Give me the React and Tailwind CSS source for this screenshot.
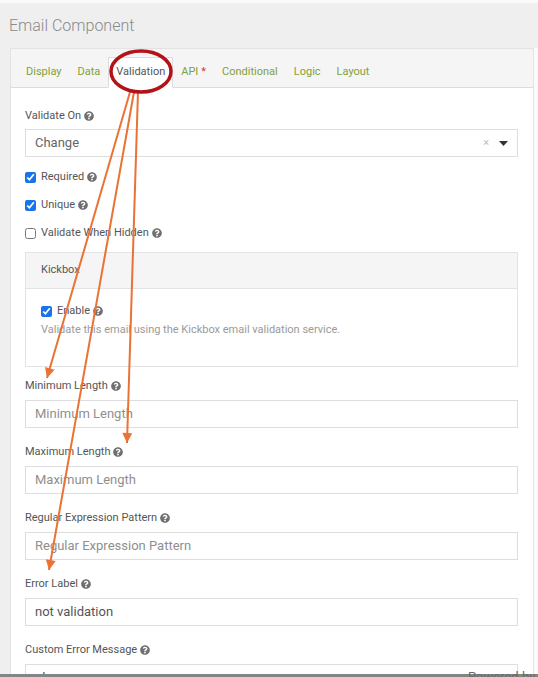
import React from "react";
import { FaQuestionCircle } from "react-icons/fa";

function Help() {
  return <FaQuestionCircle className="text-[#707070] shrink-0" size={10} />;
}

function Label({ children, tight }) {
  return (
    <div
      className={
        tight
          ? "flex items-center gap-[3px] h-4 leading-4 text-[11px] text-[#555] mb-[5px]"
          : "flex items-center gap-[3px] h-4 leading-4 text-[11px] text-[#555] mb-[6px]"
      }
    >
      <span>{children}</span>
      <Help />
    </div>
  );
}

function Check({ checked }) {
  return (
    <input
      type="checkbox"
      readOnly
      checked={checked}
      className="m-0 w-[11px] h-[11px] accent-[#1a73e8] shrink-0"
    />
  );
}

function CheckRow({ checked, children }) {
  return (
    <div className="flex items-center h-4 gap-[5px] text-[11px] text-[#555] leading-4">
      <Check checked={checked} />
      <span className="flex items-center gap-[3px]">
        <span>{children}</span>
        <Help />
      </span>
    </div>
  );
}

function Field({ label, value, placeholder }) {
  return (
    <div className="mb-[16px]">
      <Label>{label}</Label>
      <div className="h-[28px] border border-[#dedede] flex items-center pl-[9px] text-[13px]">
        {value ? (
          <span className="text-[#555]">{value}</span>
        ) : (
          <span className="text-[#8f8f8f]">{placeholder}</span>
        )}
      </div>
    </div>
  );
}

const tabs = ["Display", "Data", "Validation", "API", "Conditional", "Logic", "Layout"];

export default function App() {
  return (
    <div className="relative w-[538px] h-[677px] overflow-hidden bg-[#efefef] font-['Roboto',sans-serif]">
      <div className="h-[3px] bg-[#fafafa]" />
      <div className="h-[45px] pl-[9px] flex items-center text-[16px] font-light text-[#8a8a8a]">
        Email Component
      </div>
      <div className="flex">
        <div className="w-[10px] shrink-0" />
        <div className="w-[524px] shrink-0 bg-white border border-[#e3e3e3]">
          <div className="h-[39px] bg-[#f5f5f5] border-b border-[#dcdcdc] flex items-end pl-[7px]">
            {tabs.map((t) => {
              const active = t === "Validation";
              return (
                <div
                  key={t}
                  className={
                    active
                      ? "h-[31px] -mb-px px-[7px] flex items-center bg-white border border-[#dcdcdc] border-b-white text-[11px] text-[#555]"
                      : "h-[31px] -mb-px px-[8px] flex items-center text-[11px] text-[#83a03a]"
                  }
                >
                  {t}
                  {t === "API" && <span className="text-[#d9363e] ml-[3px]">*</span>}
                </div>
              );
            })}
          </div>
          <div className="pt-[20px] pl-[14px] pr-[15px]">
            <Label tight>Validate On</Label>
            <div className="h-[28px] border border-[#dedede] flex items-center pl-[9px] pr-[9px] text-[13px] text-[#666]">
              <span className="flex-1">Change</span>
              <span className="text-[#bdbdbd] text-[11px] mr-[10px]">×</span>
              <svg width="9" height="5" viewBox="0 0 9 5">
                <path d="M0 0 L9 0 L4.5 5 Z" fill="#333" />
              </svg>
            </div>
            <div className="mt-[12px] flex flex-col gap-[12px]">
              <CheckRow checked>Required</CheckRow>
              <CheckRow checked>Unique</CheckRow>
              <CheckRow checked={false}>Validate When Hidden</CheckRow>
            </div>
            <div className="mt-[11px] border border-[#e3e3e3]">
              <div className="h-[36px] bg-[#f5f5f5] border-b border-[#e3e3e3] flex items-center pl-[15px] text-[11px] text-[#555]">
                Kickbox
              </div>
              <div className="pt-[14px] pb-[28px] pl-[15px]">
                <CheckRow checked>Enable</CheckRow>
                <div className="mt-[3px] h-4 leading-4 text-[11px] text-[#9a9a9a]">
                  Validate this email using the Kickbox email validation service.
                </div>
              </div>
            </div>
            <div className="mt-[11px]">
              <Field label="Minimum Length" placeholder="Minimum Length" />
              <Field label="Maximum Length" placeholder="Maximum Length" />
              <Field label="Regular Expression Pattern" placeholder="Regular Expression Pattern" />
              <Field label="Error Label" value="not validation" />
              <Field label="Custom Error Message" value="please" />
            </div>
          </div>
        </div>
        <div className="flex-1 bg-[#fbfbfb]" />
      </div>

      <div className="absolute left-0 right-0 bottom-0 h-[3px] bg-[#858585]" />
      <div className="absolute left-[468px] top-[669px] text-[13px] leading-4 text-[#6a6a6a]">Powered by</div>

      <svg className="absolute inset-0 pointer-events-none" width="538" height="677" viewBox="0 0 538 677">
        <defs>
          <marker id="ah" viewBox="0 0 10 10" refX="10" refY="5" markerWidth="11" markerHeight="10" markerUnits="userSpaceOnUse" orient="auto">
            <path d="M0 0 L10 5 L0 10 Z" fill="#ea7235" />
          </marker>
        </defs>
        <line x1="130" y1="92" x2="47" y2="378" stroke="#ea7235" strokeWidth="2" markerEnd="url(#ah)" />
        <line x1="134" y1="92" x2="49" y2="570" stroke="#ea7235" strokeWidth="2" markerEnd="url(#ah)" />
        <line x1="138" y1="92" x2="127" y2="443" stroke="#ea7235" strokeWidth="2" markerEnd="url(#ah)" />
        <ellipse cx="141" cy="71.5" rx="30" ry="20.5" fill="none" stroke="#b3121b" strokeWidth="3.5" />
      </svg>
    </div>
  );
}
